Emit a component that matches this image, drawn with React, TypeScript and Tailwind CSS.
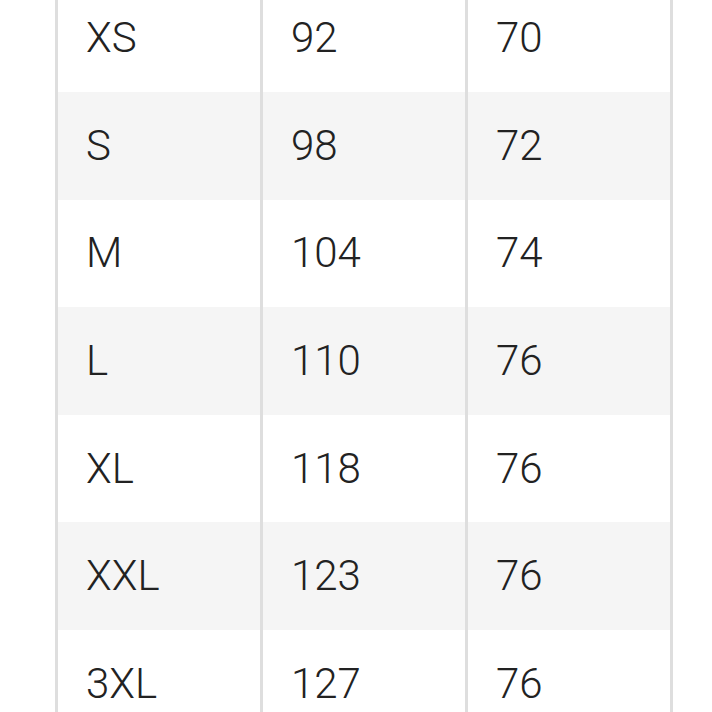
import React from "react";

const rows: [string, string, string][] = [
  ["XS", "92", "70"],
  ["S", "98", "72"],
  ["M", "104", "74"],
  ["L", "110", "76"],
  ["XL", "118", "76"],
  ["XXL", "123", "76"],
  ["3XL", "127", "76"],
];

export default function App() {
  return (
    <div className="w-[712px] h-[712px] overflow-hidden bg-white">
      <div
        className="ml-[55px] mt-[-15.6px] w-[618px] border-r-[3px] border-[#dedede] text-[#222222]"
        style={{ fontFamily: "Roboto, 'Noto Sans', sans-serif" }}
      >
        {rows.map((r, i) => (
          <div
            key={i}
            className={`grid grid-cols-3 h-[107.6px] ${i % 2 === 1 ? "bg-[#f5f5f5]" : "bg-white"}`}
          >
            {r.map((c, j) => (
              <div
                key={j}
                className="border-l-[3px] border-[#dedede] flex items-center pl-[28px] text-[42px] font-light leading-none"
              >
                {c}
              </div>
            ))}
          </div>
        ))}
      </div>
    </div>
  );
}
